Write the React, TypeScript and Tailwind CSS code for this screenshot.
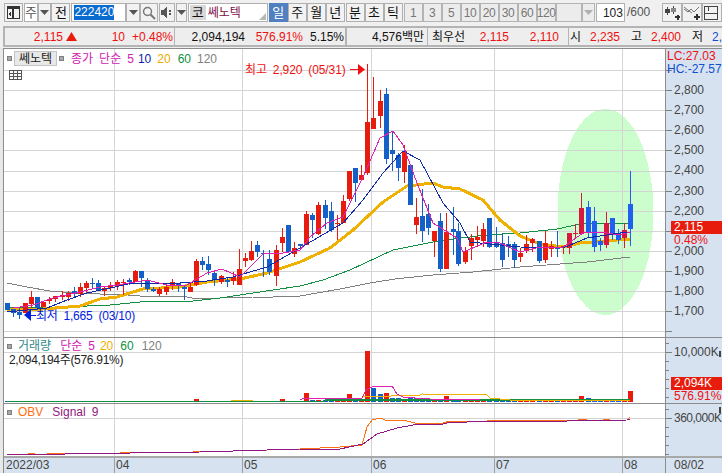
import type { ReactNode } from "react";

const FONT = "font-['Liberation_Sans','Noto_Sans_CJK_KR',sans-serif] [word-spacing:2.7px]";

const RED = "#e81c0c";
const BLUE = "#1460c8";

type Candle = [number, number, number, number, number, "r" | "b" | "c" | "v"];

// raw values were read off 3x crops, offset says where the crop starts
const toPage = (off: number, rows: Candle[]): Candle[] =>
  rows.map(([x, a, b, c, d, k]) => [x, off + a / 3, off + b / 3, off + c / 3, off + d / 3, k]);

const CANDLES: Candle[] = [
  ...toPage(230, [
    [7, 220, 240, 220, 240, "b"],
    [13, 238, 248, 238, 262, "b"],
    [19, 245, 255, 230, 268, "b"],
    [25, 220, 250, 220, 250, "r"],
    [31, 202, 222, 184, 235, "r"],
    [37, 202, 235, 200, 240, "b"],
    [43, 217, 230, 212, 232, "r"],
    [49, 207, 213, 200, 222, "r"],
    [55, 198, 208, 198, 215, "r"],
    [62, 195, 200, 182, 210, "r"],
    [68, 188, 200, 183, 212, "r"],
    [74, 183, 192, 170, 205, "b"],
    [80, 172, 192, 160, 200, "r"],
    [86, 158, 175, 153, 188, "r"],
    [92, 158, 163, 145, 178, "b"],
    [98, 158, 180, 150, 183, "b"],
    [104, 175, 183, 170, 197, "r"],
    [110, 165, 175, 155, 182, "r"],
    [117, 155, 168, 150, 180, "r"],
    [123, 155, 160, 148, 195, "r"],
    [129, 150, 156, 145, 165, "b"],
    [135, 123, 155, 120, 157, "r"],
    [141, 123, 145, 123, 170, "b"],
    [147, 150, 178, 145, 185, "b"],
    [153, 176, 183, 172, 186, "b"],
    [159, 177, 192, 170, 197, "r"],
    [166, 170, 185, 165, 195, "r"],
    [172, 155, 165, 148, 180, "r"],
    [178, 160, 168, 158, 185, "b"],
    [184, 170, 178, 165, 210, "b"],
    [190, 170, 185, 158, 187, "r"],
    [196, 93, 165, 88, 168, "r"],
    [202, 93, 105, 80, 120, "b"],
    [208, 103, 120, 78, 135, "b"],
    [214, 130, 150, 122, 167, "b"],
    [221, 138, 155, 135, 162, "r"],
    [227, 150, 155, 140, 170, "b"],
  ]),
  ...toPage(170, [
    [233, 320, 333, 307, 345, "r"],
    [239, 298, 346, 238, 346, "r"],
    [245, 265, 273, 250, 290, "r"],
    [251, 243, 270, 213, 273, "r"],
    [257, 225, 247, 213, 260, "b"],
    [263, 249, 252, 240, 320, "b"],
    [269, 267, 305, 240, 315, "b"],
    [276, 240, 318, 225, 347, "r"],
    [282, 200, 218, 175, 247, "r"],
    [288, 165, 247, 165, 250, "b"],
    [294, 234, 252, 215, 260, "r"],
    [300, 223, 228, 223, 240, "b"],
    [306, 132, 225, 123, 225, "r"],
  ]),
  ...toPage(60, [
    [312, 465, 480, 460, 533, "b"],
    [318, 435, 522, 427, 525, "r"],
    [325, 435, 473, 420, 508, "b"],
    [331, 453, 510, 427, 515, "b"],
    [337, 489, 492, 465, 540, "r"],
    [343, 422, 488, 405, 490, "r"],
    [349, 333, 417, 333, 423, "r"],
    [355, 323, 368, 323, 425, "b"],
    [361, 345, 360, 315, 360, "r"],
    [367, 186, 340, 18, 345, "r"],
    [373, 174, 206, 50, 208, "r"],
    [380, 123, 167, 90, 205, "r"],
    [386, 102, 297, 85, 312, "b"],
    [392, 270, 282, 215, 332, "b"],
    [398, 284, 324, 280, 362, "b"],
    [404, 272, 336, 255, 370, "r"],
    [410, 315, 435, 315, 435, "b"],
    [416, 470, 495, 415, 522, "r"],
    [422, 468, 513, 388, 545, "b"],
    [428, 462, 504, 432, 525, "b"],
    [434, 513, 544, 513, 590, "r"],
    [440, 483, 627, 460, 635, "b"],
    [446, 516, 627, 460, 627, "r"],
    [453, 507, 516, 440, 585, "b"],
    [458, 513, 612, 490, 617, "b"],
    [465, 573, 605, 560, 612, "r"],
    [471, 534, 557, 522, 600, "r"],
    [477, 530, 540, 497, 560, "r"],
    [483, 507, 542, 490, 560, "r"],
    [489, 474, 560, 474, 565, "b"],
    [496, 550, 560, 500, 565, "b"],
    [502, 550, 600, 520, 622, "b"],
    [508, 552, 560, 527, 590, "b"],
    [514, 552, 600, 545, 625, "b"],
  ]),
  ...toPage(100, [
    [520, 460, 472, 445, 485, "r"],
    [526, 432, 453, 405, 460, "r"],
    [532, 417, 430, 415, 455, "r"],
    [539, 423, 482, 423, 490, "b"],
    [545, 430, 480, 392, 490, "r"],
    [551, 437, 447, 422, 470, "r"],
    [557, 444, 447, 393, 470, "b"],
    [563, 437, 440, 437, 462, "r"],
    [569, 399, 444, 399, 462, "c"],
    [575, 399, 402, 372, 418, "c"],
    [581, 324, 403, 280, 405, "c"],
    [588, 321, 395, 303, 410, "v"],
    [594, 363, 440, 322, 455, "v"],
    [600, 423, 435, 415, 452, "v"],
    [606, 369, 434, 336, 445, "c"],
    [612, 354, 405, 354, 420, "v"],
    [618, 400, 420, 388, 432, "v"],
    [624, 390, 413, 370, 443, "c"],
    [630, 312, 386, 213, 437, "v"],
  ]),
];

const COLORS = { r: RED, b: BLUE, c: "#d81840", v: "#2060f0" };

const MA5 = "13,308 33,305 53,298 80,292 100,287 117,285 147,280 167,285 187,285 207,273 222,269 240,277 263,254 283,253 300,250 310,237 327,223 343,217 363,177 380,138 393,131 403,145 417,183 433,223 457,238 463,252 487,242 500,243 520,252 540,247 563,247 583,233 600,232 620,235 630,232";
const MA10 = "7,312 47,308 67,300 87,293 110,288 133,283 153,283 180,283 207,281 233,277 267,267 300,248 343,223 363,200 383,173 403,151 420,160 443,203 460,223 470,242 520,247 563,248 587,238 620,233 630,232";
const MA20 = "7,310 43,309 80,306 100,299 117,297 143,289 180,287 207,282 240,279 267,273 300,262 330,248 353,230 383,202 407,186 433,183 443,187 460,189 483,200 500,220 520,236 540,244 563,247 580,243 630,239";
const MA60 = "7,307 37,307 60,308 87,306 110,305 140,302 160,301 193,301 220,298 253,293 300,286 323,280 350,270 393,250 433,242 453,239 487,235 520,233 557,229 580,224 630,223";
const MA120 = "7,283 27,287 50,291 73,293 100,294 115,294 140,296 160,296 187,297 192,298 220,298 253,297 273,297 300,296 340,289 370,283 395,279 433,275 473,272 520,267 560,264 587,262 630,257";

const VOL_MA5 = "300,400 304,398 345,398 362,398 366,390 372,387 385,386 392,386 397,394 403,397 415,398 430,399 480,400 630,400";
const VOL_MA20 = "362,397 420,395 422,394 487,395 490,398 510,400 630,400";
const OBV = "300,449 340,447 362,445 367,427 372,420 380,418 388,421 403,420 415,423 443,423 450,421 487,421 627,420 630,417";
const SIGNAL = "7,454 65,454 66,453 130,453 200,452 300,449 340,449 363,444 377,434 397,428 413,425 443,424 447,423 487,421 567,421 627,420 630,419";

// short bits of the OBV line that stick out over the signal line
const OBV_BITS = [
  [28, 35, 453], [47, 65, 453], [120, 145, 452], [163, 170, 452], [193, 200, 451], [237, 267, 450], [273, 300, 449],
  [523, 536, 420], [542, 555, 420], [566, 571, 420], [578, 587, 419], [603, 610, 419],
];

const V_GRID = [114, 242, 371, 494, 622];
const H_GRID = Array.from({ length: 14 }, (_, i) => Math.round(70 + i * 20.1));

const PRICES = [
  ["2,800", 89], ["2,700", 109], ["2,600", 129], ["2,500", 149], ["2,400", 169], ["2,300", 190],
  ["2,200", 210], ["2,000", 250], ["1,900", 270], ["1,800", 290], ["1,700", 310],
] as const;

// volume bars, [height, colour] where it is not the default small bar
const VOL_BARS: Record<number, [number, string]> = {
  196: [3, RED], 239: [2, RED], 282: [3, RED], 306: [9, RED], 343: [3, RED], 349: [8, RED], 367: [51, RED],
  373: [14, BLUE], 380: [8, BLUE], 386: [9, RED], 392: [4, BLUE], 398: [4, BLUE], 404: [3, RED], 410: [4, BLUE],
  416: [4, BLUE], 446: [6, RED], 581: [6, RED], 588: [4, BLUE], 630: [11, RED],
};

function Btn({ w, active, dim, children }: { w: string; active?: boolean; dim?: boolean; children?: ReactNode }) {
  return (
    <div
      className={`${w} h-[19px] shrink-0 flex items-center justify-center border text-[13px] ${
        active
          ? "bg-[#5080c0] border-[#5080c0] text-white"
          : dim
            ? "bg-[#ececec] border-[#b4b4b4] text-[#777777]"
            : "bg-[#f2f2f2] border-[#b0b0b0] text-[#111111]"
      }`}
    >
      {children}
    </div>
  );
}

const Arrow = ({ color = "#555555" }: { color?: string }) => (
  <svg width="9" height="5" viewBox="0 0 9 5">
    <path d="M0 0H9L4.5 5Z" fill={color} />
  </svg>
);

function Toolbar() {
  return (
    <div className="h-[25px] flex items-start pt-[3px] pl-[4px] overflow-hidden">
      <Btn w="w-[19px]">
        <svg width="13" height="13" viewBox="0 0 13 13" fill="none" shapeRendering="crispEdges">
          <rect x="0.5" y="0.5" width="12" height="12" stroke="#333333" />
          <rect x="1" y="1" width="11" height="2" fill="#333333" />
          <rect x="5" y="3" width="2" height="9" fill="#333333" />
          <path d="M4 6V10L1 8Z" fill="#333333" />
        </svg>
      </Btn>
      <div className="w-[19px] h-[19px] ml-[1px] bg-white border border-[#b0b0b0] flex items-center justify-center text-[13px] text-[#555555]">
        주
      </div>
      <Btn w="w-[13px]">
        <Arrow />
      </Btn>
      <div className="w-[1px]" />
      <Btn w="w-[19px]">전</Btn>
      <div className="w-[2px]" />
      <div className="w-[55px] h-[19px] shrink-0 bg-white border border-[#b0b0b0] flex items-center pl-[2px] text-[12px]">
        <span className="bg-[#0a6cd0] text-white leading-[15px]">222420</span>
      </div>
      <Btn w="w-[14px]">
        <Arrow />
      </Btn>
      <Btn w="w-[18px]">
        <svg width="14" height="14" viewBox="0 0 14 14" fill="none" stroke="#777777">
          <circle cx="5.5" cy="5.5" r="4" strokeWidth="1.4" />
          <path d="M8.5 8.5L13 13" strokeWidth="2" />
        </svg>
      </Btn>
      <div className="w-[2px]" />
      <Btn w="w-[16px]">
        <svg width="12" height="11" viewBox="0 0 12 11" shapeRendering="crispEdges">
          <path d="M0 3H2V8H0ZM2 3L5 0H6V11H5L2 8Z" fill="#555555" />
          <rect x="8" y="3" width="2" height="2" fill="#555555" />
          <rect x="8" y="6" width="2" height="2" fill="#555555" />
        </svg>
      </Btn>
      <div className="w-[1px]" />
      <Btn w="w-[11px]">
        <Arrow />
      </Btn>
      <div className="w-[2px]" />
      <div className="relative w-[80px] h-[19px] shrink-0 bg-white border border-[#b0b0b0] flex items-center text-[13px]">
        <div className="w-[16px] h-[15px] ml-[1px] bg-[#d8d8d8] flex items-center justify-center text-[#111111]">코</div>
        <span className="ml-[2px] text-[12px] text-[#7a1048]">쎄노텍</span>
        <svg className="absolute right-[1px] bottom-[1px]" width="7" height="7" viewBox="0 0 7 7">
          <path d="M7 0V7H0Z" fill="#b8b8b8" />
        </svg>
      </div>
      <div className="w-[2px]" />
      <Btn w="w-[19px]" active>일</Btn>
      {["주", "월", "년"].map((t) => (
        <Btn key={t} w="w-[19px]">{t}</Btn>
      ))}
      <div className="w-[2px]" />
      {["분", "초", "틱"].map((t) => (
        <Btn key={t} w="w-[19px]">{t}</Btn>
      ))}
      <div className="w-[2px]" />
      {["1", "3", "5", "10", "20", "30", "60", "120"].map((t) => (
        <Btn key={t} w="w-[19px]" dim>
          <span className="text-[12px] tracking-[-0.4px]">{t}</span>
        </Btn>
      ))}
      <div className="w-[2px]" />
      <div className="w-[26px] h-[19px] shrink-0 bg-[#ececec] border border-[#b4b4b4]" />
      <Btn w="w-[13px]" dim>
        <Arrow color="#b0b0b0" />
      </Btn>
      <div className="w-[1px]" />
      <div className="w-[29px] h-[19px] shrink-0 bg-white border border-[#b0b0b0] flex items-center justify-end pr-[1px] text-[12px] text-[#222222]">
        103
      </div>
      <span className="ml-[2px] w-[35px] shrink-0 text-[12px] leading-[19px] text-[#555555]">/600</span>
      <Btn w="w-[20px]">
        <svg width="16" height="14" viewBox="0 0 16 14" shapeRendering="crispEdges">
          <path d="M3 1V9M9 0V8" stroke="#444444" />
          <rect x="1" y="3" width="5" height="4" fill="#444444" />
          <rect x="7" y="2" width="5" height="4" fill="#888888" />
          <path d="M11 11H16M13.500 8.500V14" stroke="#333333" strokeWidth="2" />
        </svg>
      </Btn>
      <Btn w="w-[20px]">
        <svg width="16" height="14" viewBox="0 0 16 14" fill="none" stroke="#555555">
          <path d="M0 3L4 6L7 3L10 6L15 1M0 1L5 5L8 7" strokeWidth="0.8" />
          <path d="M10 11H16M13 8V14" stroke="#333333" strokeWidth="2" />
        </svg>
      </Btn>
      <Btn w="w-[20px]">
        <svg width="16" height="14" viewBox="0 0 16 14" fill="none" stroke="#444444" shapeRendering="crispEdges">
          <rect x="0.5" y="0.500" width="13" height="13" />
          <path d="M0 7H14M4 0V5" />
        </svg>
      </Btn>
    </div>
  );
}

const Cell = ({ w, cls, right, children }: { w: string; cls?: string; right?: boolean; children: ReactNode }) => (
  <span className={`${w} shrink-0 whitespace-nowrap ${right ? "text-right" : ""} ${cls ?? ""}`}>{children}</span>
);

function InfoRow() {
  const red = "text-[#f01010]";
  return (
    <div className="h-[21px] ml-[3px] mt-[1px] flex items-center bg-[#eeeeee] border-y-2 border-l-2 border-[#b4b4b4] text-[12px] text-[#111111] overflow-hidden">
      <div className="w-[170px] shrink-0 flex items-center h-full border-r border-[#b4b4b4]">
        <Cell w="w-[58px]" cls={red} right>2,115</Cell>
        <svg className="ml-[3px]" width="11" height="9" viewBox="0 0 11 9">
          <path d="M5.500 0L11 9H0Z" fill="#e81c0c" />
        </svg>
        <Cell w="w-[48px]" cls={red} right>10</Cell>
        <Cell w="w-[48px]" cls={red} right>+0.48%</Cell>
      </div>
      <Cell w="w-[70px]" right>2,094,194</Cell>
      <Cell w="w-[58px]" cls={red} right>576.91%</Cell>
      <Cell w="w-[41px]" right>5.15%</Cell>
      <div className="w-[2px] h-full shrink-0 bg-[#b4b4b4] ml-[1px]" />
      <div className="w-[81px] h-full shrink-0 flex items-center justify-end pr-[3px] border-r border-[#b4b4b4]">4,576백만</div>
      <Cell w="w-[36px]" cls="ml-[4px]">최우선</Cell>
      <Cell w="w-[41px]" cls={red} right>2,115</Cell>
      <Cell w="w-[50px]" cls={red} right>2,110</Cell>
      <div className="w-[1px] h-full shrink-0 bg-[#b4b4b4] ml-[9px]" />
      <Cell w="w-[10px]" cls="ml-[1px] text-center">시</Cell>
      <Cell w="w-[40px]" cls={red} right>2,235</Cell>
      <Cell w="w-[10px]" cls="ml-[11px] text-center">고</Cell>
      <Cell w="w-[40px]" cls={red} right>2,400</Cell>
      <Cell w="w-[10px]" cls="ml-[11px] text-center">저</Cell>
      <Cell w="w-[10px]" cls="ml-[10px] text-[#1050d0]">2,</Cell>
    </div>
  );
}

function Grid({ top, h, lines }: { top: number; h: number; lines: number[] }) {
  return (
    <g shapeRendering="crispEdges" stroke="#d4d4d4">
      {lines.map((y) => (
        <line key={y} x1="4" x2="665" y1={y + 0.5} y2={y + 0.5} />
      ))}
      {V_GRID.map((x) => (
        <line key={x} x1={x + 0.5} x2={x + 0.5} y1={top} y2={top + h} />
      ))}
    </g>
  );
}

const Dot = () => <span className="block w-[5px] h-[5px] bg-[#a8a8a8] border border-[#808080] shrink-0" />;

function Ticks({ ys, minor = [] }: { ys: number[]; minor?: number[] }) {
  return (
    <svg width="8" height="100%" className="absolute left-0 top-0" shapeRendering="crispEdges">
      {ys.map((y) => (
        <line key={y} x1="0" x2="6" y1={y + 0.5} y2={y + 0.5} stroke="#808080" />
      ))}
      {minor.map((y) => (
        <line key={y} x1="0" x2="3" y1={y + 0.5} y2={y + 0.5} stroke="#808080" />
      ))}
    </svg>
  );
}

function MainPanel() {
  return (
    <div className="h-[289px] flex border-t border-[#8c8c8c]">
      <div className="relative w-[661px] bg-white">
        <svg className="block" width="661" height="288" viewBox="4 49 661 288">
          <ellipse cx="605.500" cy="212" rx="48" ry="103" fill="#ccfdcc" shapeRendering="crispEdges" />
          <Grid top={49} h={288} lines={H_GRID} />
          <g fill="none" shapeRendering="crispEdges">
            <polyline points={MA120} stroke="#808080" strokeWidth="1" />
            <polyline points={MA60} stroke="#109040" strokeWidth="1" />
            <polyline points={MA20} stroke="#f0b000" strokeWidth="3" />
          </g>
          {CANDLES.map(([x, a, b, c, d, k]) => (
            <g key={x} shapeRendering="crispEdges" fill={COLORS[k]}>
              <rect x={x} y={c} width="1" height={d - c} />
              <rect x={x - 2} y={a} width="5" height={b - a} />
            </g>
          ))}
          <g fill="none" shapeRendering="crispEdges" strokeWidth="1">
            <polyline points={MA10} stroke="#102aa8" />
            <polyline points={MA5} stroke="#e020b0" />
          </g>
          {/* high and low markers */}
          <path d="M350 69.500H359" stroke="#f01010" />
          <path d="M358 64V75L365 69.500Z" fill="#f01010" />
          <path d="M367.500 64V76" stroke="#f01010" />
          <path d="M26 315.500H36" stroke="#0020e0" />
          <path d="M31 309V321L24 315Z" fill="#0020e0" />
        </svg>
        <div className="absolute left-[3px] top-[1px] h-[17px] flex items-center text-[12px]">
          <Dot />
          <div className="ml-[2px] w-[43px] h-[15px] bg-[#e8e8e8] border border-[#c4c4c4] flex items-center justify-center text-[#222222]">
            쎄노텍
          </div>
          <span className="ml-[2px]"><Dot /></span>
          <span className="ml-[7px] text-[#d020b0]">종가 단순 5</span>
          <span className="ml-[4px] text-[#1020b0]">10</span>
          <span className="ml-[6px] text-[#f0a800]">20</span>
          <span className="ml-[7px] text-[#109040]">60</span>
          <span className="ml-[6px] text-[#808080]">120</span>
        </div>
        <svg className="absolute left-[5px] top-[21px]" width="13" height="10" viewBox="0 0 13 10" fill="none" stroke="#555555" shapeRendering="crispEdges">
          <rect x="0.500" y="0.500" width="12" height="9" />
          <path d="M0 3.500H13M0 6.500H13M4.500 0V10M8.500 0V10" />
        </svg>
        <span className="absolute left-[241px] top-[12px] text-[12px] tracking-[-0.1px] text-[#f01010]">최고 2,920 (05/31)</span>
        <span className="absolute left-[32px] top-[258px] text-[12px] tracking-[-0.2px] text-[#0020e0]">최저 1,665 (03/10)</span>
      </div>
      <div className="relative flex-1 bg-[#d6e2f0] border-l border-[#8c8c8c] overflow-hidden text-[12px] text-[#444444]">
        <Ticks ys={H_GRID.map((y) => y - 49)} />
        {PRICES.map(([t, y]) => (
          <span key={t} className="absolute left-[8px] leading-[14px]" style={{ top: y - 55 }}>{t}</span>
        ))}
        <div className="absolute left-[1px] top-[1px] leading-[13px] whitespace-nowrap">
          <div className="text-[#f01010]">LC:27.03</div>
          <div className="text-[#1050d0]">HC:-27.57</div>
        </div>
        <div className="absolute left-[5px] right-0 top-[172px] h-[13px] bg-[#e81c0c] pl-[3px] leading-[13px] text-white">2,115</div>
        <span className="absolute left-[8px] top-[185px] leading-[13px] text-[#f01010]">0.48%</span>
      </div>
    </div>
  );
}

function VolumePanel() {
  return (
    <div className="h-[66px] flex border-t border-[#8c8c8c]">
      <div className="relative w-[661px] bg-white">
        <svg className="block" width="661" height="65" viewBox="4 338 661 65">
          <Grid top={338} h={65} lines={[352]} />
          {CANDLES.map(([x, , , , , k]) => {
            const [h, fill] = VOL_BARS[x] ?? [x > 300 ? 2 : 1, COLORS[k]];
            return <rect key={x} x={x - 2} y={402 - h} width="5" height={h} fill={fill} shapeRendering="crispEdges" />;
          })}
          <g fill="none" shapeRendering="crispEdges">
            <path d="M7 401.500H325" stroke="#109040" />
            <path d="M231 400.500H253" stroke="#f0b000" />
            <path d="M325 399.500H630" stroke="#109040" strokeWidth="2" />
            <polyline points={VOL_MA20} stroke="#f0b000" />
            <polyline points={VOL_MA5} stroke="#e020b0" />
          </g>
        </svg>
        <div className="absolute left-[3px] top-0 h-[16px] flex items-center text-[12px]">
          <Dot />
          <span className="ml-[6px] text-[#308888]">거래량</span>
          <span className="ml-[9px] text-[#d020b0]">단순 5</span>
          <span className="ml-[5px] text-[#f0b000]">20</span>
          <span className="ml-[7px] text-[#109040]">60</span>
          <span className="ml-[8px] text-[#808080]">120</span>
        </div>
        <span className="absolute left-[5px] top-[15px] text-[12px] leading-[14px] tracking-[-0.3px] text-[#222222]">2,094,194주(576.91%)</span>
      </div>
      <div className="relative flex-1 bg-[#d6e2f0] border-l border-[#8c8c8c] overflow-hidden text-[12px] text-[#444444]">
        <Ticks ys={[14]} minor={[5, 23, 32, 41, 50, 59]} />
        <span className="absolute left-[8px] top-[7px] leading-[14px]">10,000K</span>
        <div className="absolute right-[1px] top-[13px] w-[2px] h-[6px] bg-[#444444]" />
        <div className="absolute left-[5px] right-0 top-[39px] h-[13px] bg-[#e81c0c] pl-[3px] leading-[13px] text-white">2,094K</div>
        <span className="absolute left-[8px] top-[52px] leading-[13px] text-[#f01010]">576.91%</span>
      </div>
    </div>
  );
}

function ObvPanel() {
  return (
    <div className="h-[53px] flex border-t border-[#8c8c8c]">
      <div className="relative w-[661px] bg-white">
        <svg className="block" width="661" height="52" viewBox="4 404 661 52">
          <Grid top={404} h={52} lines={[418]} />
          <g fill="none" shapeRendering="crispEdges">
            <polyline points={OBV} stroke="#ff7010" />
            {OBV_BITS.map(([a, b, y]) => (
              <path key={a} d={`M${a} ${y + 0.5}H${b}`} stroke="#ff7010" />
            ))}
            <polyline points={SIGNAL} stroke="#901880" />
          </g>
        </svg>
        <div className="absolute left-[3px] top-0 h-[16px] flex items-center text-[12px]">
          <Dot />
          <span className="ml-[6px] text-[#ff7010]">OBV</span>
          <span className="ml-[9px] text-[#901880]">Signal 9</span>
        </div>
      </div>
      <div className="relative flex-1 bg-[#d6e2f0] border-l border-[#8c8c8c] overflow-hidden text-[12px] text-[#444444]">
        <Ticks ys={[14]} minor={[5, 23, 32, 41, 50]} />
        <span className="absolute left-[8px] top-[7px] leading-[14px] tracking-[-0.5px] whitespace-nowrap">360,000K</span>
        <div className="absolute right-[1px] top-[3px] w-[2px] h-[6px] bg-[#444444]" />
      </div>
    </div>
  );
}

function DateAxis() {
  const marks = [
    ["2022/03", "w-[110px] pl-[2px]"],
    ["04", "w-[128px] pl-[1px] border-l border-[#a0a0a0]"],
    ["05", "w-[129px] pl-[1px] border-l border-[#a0a0a0]"],
    ["06", "w-[123px] pl-[1px] border-l border-[#a0a0a0]"],
    ["07", "w-[128px] pl-[1px] border-l border-[#a0a0a0]"],
    ["08", "w-[43px] pl-[1px] border-l border-[#a0a0a0]"],
  ];
  return (
    <div className="h-[17px] flex bg-[#d6e2f0] border-t-2 border-[#a8a8a8] text-[12px] leading-[15px] text-[#444444]">
      {marks.map(([t, c]) => (
        <div key={t} className={c}>{t}</div>
      ))}
      <div className="flex-1 pl-[8px] border-l border-[#8c8c8c]">08/02</div>
    </div>
  );
}

export default function App() {
  return (
    <div className={`w-[722px] h-[473px] overflow-hidden bg-[#f0f0f0] flex flex-col ${FONT}`}>
      <Toolbar />
      <InfoRow />
      <div className="h-[1px]" />
      <div className="flex-1 flex min-h-0">
        <div className="w-[4px] shrink-0 bg-[#e8e8e8] border-r border-[#8c8c8c]" />
        <div className="flex-1 flex flex-col min-w-0">
          <MainPanel />
          <VolumePanel />
          <ObvPanel />
          <DateAxis />
        </div>
      </div>
    </div>
  );
}
